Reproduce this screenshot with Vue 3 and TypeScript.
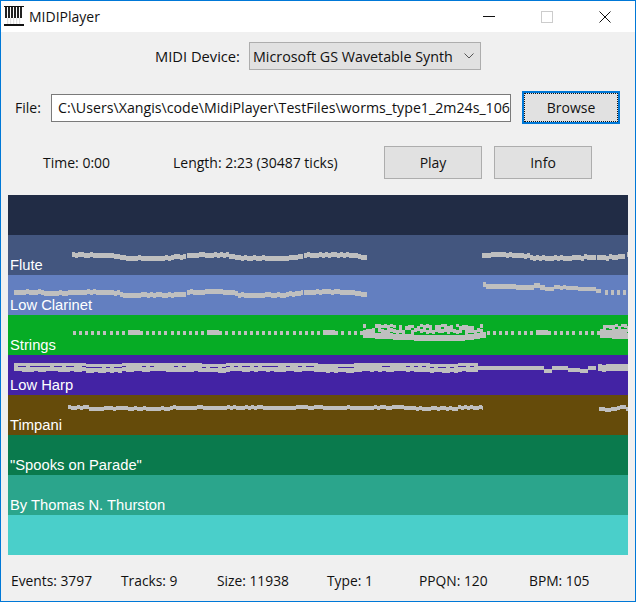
<template>
  <div class="window">
    <!-- title bar -->
    <div class="titlebar">
      <svg class="app-icon" width="20" height="20" viewBox="0 0 20 20">
        <rect x="0" y="0" width="20" height="20" fill="#fff" />
        <rect x="0" y="0" width="20" height="1" fill="#111" />
        <rect x="0" y="18" width="20" height="2" fill="#111" />
        <rect v-for="k in 6" :key="k" :x="k * 3 - 2" y="1" width="2" height="11" fill="#222" />
        <rect v-for="k in 5" :key="'w' + k" :x="k * 3 + 0.5" y="12" width="0.6" height="6" fill="#c4c4c4" />
      </svg>
      <span class="app-title">MIDIPlayer</span>
      <div class="win-btns">
        <svg width="12" height="12" viewBox="0 0 12 12"><rect x="0" y="5" width="12" height="1" fill="#111" /></svg>
        <svg width="12" height="12" viewBox="0 0 12 12"><rect x="0.5" y="0.5" width="11" height="11" fill="none" stroke="#ccc" /></svg>
        <svg width="12" height="12" viewBox="0 0 12 12"><path d="M0.5 0.5L11.5 11.5M11.5 0.5L0.5 11.5" stroke="#111" fill="none" /></svg>
      </div>
    </div>

    <div class="device-row">
      <label>MIDI Device:</label>
      <div class="select">
        <span>Microsoft GS Wavetable Synth</span>
        <svg width="10" height="6" viewBox="0 0 10 6"><path d="M0.5 0.5L5 5L9.5 0.5" fill="none" stroke="#555" /></svg>
      </div>
    </div>

    <div class="file-row">
      <label>File:</label>
      <input class="file-input" type="text" readonly :value="filePath" />
      <button class="btn btn-browse"><span>Browse</span></button>
    </div>

    <div class="time-row">
      <span class="time">Time: 0:00</span>
      <span class="length">Length: 2:23 (30487 ticks)</span>
      <button class="btn btn-play">Play</button>
      <button class="btn btn-info">Info</button>
    </div>

    <div class="tracks">
      <div v-for="t in tracks" :key="t.color" class="lane" :style="{ background: t.color }">
        <span>{{ t.name }}</span>
      </div>
      <svg class="notes" width="620" height="360" viewBox="8 195 620 360" shape-rendering="crispEdges">
        <rect v-for="(n, i) in notes" :key="i" :x="n.x" :y="n.y" :width="n.w" :height="n.h" fill="#bfbfbf" />
      </svg>
    </div>

    <div class="status">
      <span v-for="s in stats" :key="s">{{ s }}</span>
    </div>
  </div>
</template>

<script setup lang="ts">
interface NoteRect { x: number; y: number; w: number; h: number }

const filePath = 'C:\\Users\\Xangis\\code\\MidiPlayer\\TestFiles\\worms_type1_2m24s_106'

const tracks = [
  { name: '', color: '#212c45' },
  { name: 'Flute', color: '#43567f' },
  { name: 'Low Clarinet', color: '#637fc0' },
  { name: 'Strings', color: '#06ac25' },
  { name: 'Low Harp', color: '#4323a4' },
  { name: 'Timpani', color: '#654b0a' },
  { name: '"Spooks on Parade"', color: '#0a7a4d' },
  { name: 'By Thomas N. Thurston', color: '#2ba58c' },
  { name: '', color: '#4acfca' },
]

const stats = ['Events: 3797', 'Tracks: 9', 'Size: 11938', 'Type: 1', 'PPQN: 120', 'BPM: 105']

// fixed seed so the note lanes come out the same every time
let seed = 7
function rnd(): number {
  seed = (seed * 16807) % 2147483647
  return seed / 2147483647
}

function along(pts: number[][], t: number): number {
  for (let i = 1; i < pts.length; i++) {
    if (t <= pts[i][0]) {
      const a = pts[i - 1]
      const b = pts[i]
      return a[1] + ((t - a[0]) / (b[0] - a[0])) * (b[1] - a[1])
    }
  }
  return pts[pts.length - 1][1]
}

const notes: NoteRect[] = []

function band(x0: number, x1: number, y: number, pts: number[][], len: number, h: number, jitter = 1) {
  for (let x = x0; x < x1; x += 3) {
    const off = along(pts, (x - x0) / len)
    const j = rnd() < 0.35 ? jitter : 0
    notes.push({ x, y: Math.round(y + off - j), w: Math.min(3, x1 - x), h })
  }
}

function dots(x0: number, x1: number, y: number) {
  for (let x = x0; x < x1; x += 6.1) {
    const wide = (x > 122 && x < 136) || (x > 202 && x < 214) || (x > 322 && x < 332) || (x > 534 && x < 544)
    notes.push({ x: Math.round(x), y: wide ? y - 1 : y, w: wide ? 6 : 3, h: wide ? 5 : 4 })
  }
}

function cluster(x0: number, x1: number) {
  for (let x = x0; x < x1; x += 3) {
    const t = (x - x0) / 120
    if (rnd() < 0.8) notes.push({ x, y: 324 + Math.round(rnd() * 2), w: 3, h: 3 + Math.round(rnd() * 2) })
    if (rnd() < 0.85) notes.push({ x, y: 328 + Math.round(rnd() * 2), w: 3, h: 4 })
    notes.push({ x, y: 332 + Math.round(along([[0, 0], [0.5, 3], [0.8, 3], [1, 0]], t)), w: 3, h: 6 })
  }
}

const flute = [[0, 0], [0.3, 0], [0.38, 1], [0.45, 3], [0.8, 3], [0.95, 2], [1, 1]]
const fluteEnd = [[0, 0], [0.4, 0], [0.45, 1], [0.5, 2], [1, 2]]

// flute
band(72, 186, 253, flute, 114, 5)
band(187, 303, 253, flute, 116, 5)
band(304, 367, 253, fluteEnd, 116, 5)
band(482, 596, 253, flute, 114, 5)
band(597, 625, 254, [[0, 1], [0.2, 2], [1, 0]], 28, 5)
notes.push({ x: 627, y: 252, w: 1, h: 5 })

// low clarinet
band(14, 72, 290, [[0, 0], [1, 1]], 58, 5)
band(72, 186, 290, flute, 114, 5)
band(187, 303, 290, flute, 116, 5)
band(304, 367, 290, fluteEnd, 116, 5)
band(483, 545, 284, [[0, 0], [1, 1]], 62, 5, 2)
band(545, 601, 287, [[0, 0], [0.3, -1], [0.8, 0], [1, 3]], 56, 4)
for (let x = 605; x < 628; x += 6) notes.push({ x, y: 290, w: 3, h: 5 })

// strings
dots(73, 362, 331)
cluster(363, 484)
dots(487, 597, 331)
cluster(600, 628)

// low harp
const harp = [[0, 0], [0.27, 0], [0.33, 1], [0.42, 1], [0.5, 0], [0.77, 0], [0.83, 1], [1, 0]]
for (let x = 14; x < 476; x += 4) {
  const off = Math.round(along(harp, ((x - 14) % 231) / 231))
  notes.push({ x, y: 363 + off, w: 4, h: 3 })
  notes.push({ x, y: 367 + off, w: 4, h: 4 + Math.round(rnd()) })
  if (rnd() < 0.6) notes.push({ x, y: 366 + off, w: 4, h: 1 })
}
for (let x = 476; x < 596; x += 4) {
  const y = x > 540 && x < 552 ? 370 : x > 565 && x < 585 ? 369 : 367
  notes.push({ x, y: y + Math.round(rnd() * 0.6) - 1, w: 4, h: 4 })
}
for (let x = 598; x < 628; x += 4) {
  notes.push({ x, y: 364 + Math.round(rnd()), w: 4, h: 7 })
}

// timpani
band(68, 483, 406, [[0, 0], [0.1, 1], [0.4, 0], [0.8, 0], [0.87, 1], [1, 0]], 415, 4)
band(599, 628, 407, [[0, 0], [0.3, 1], [0.7, -1], [1, 0]], 29, 4)
</script>

<style>
html, body { margin: 0; padding: 0; background: #f0f0f0; }
</style>

<style scoped>
.window{box-sizing:border-box;width:636px;height:602px;border:1px solid #0078d7;background:#f0f0f0;font-family:"Open Sans","Noto Sans",sans-serif;font-size:14px;color:#111;overflow:hidden}

.titlebar{display:flex;align-items:center;height:31px;background:#fff;padding-left:3px}
.app-icon{flex:none;align-self:flex-start;margin-top:5px}
.app-title{margin-left:5px}
.win-btns{display:flex;gap:46px;margin-left:auto;margin-right:24px}

.device-row{display:flex;align-items:center;height:28px;margin-top:10px;padding-left:154px}
.device-row label{width:94px;font-size:14.7px}
.select{box-sizing:border-box;display:flex;align-items:center;justify-content:space-between;width:232px;height:28px;padding:0 6px 0 3px;background:#e1e1e1;border:1px solid #adadad;font-size:14.3px}

.file-row{display:flex;align-items:center;height:33px;margin-top:21px;padding-left:14px}
.file-row label{width:36px}
.file-input{box-sizing:border-box;width:460px;height:28px;padding:0 0 0 6px;border:1px solid #7a7a7a;background:#fff;font:inherit;font-size:14.2px;color:#111;outline:none}
.btn{box-sizing:border-box;height:33px;width:98px;padding:0;background:#e1e1e1;border:1px solid #adadad;font:inherit;color:#111}
.btn-browse{margin-left:11px;border:2px solid #0078d7}
.btn-browse span{display:flex;align-items:center;justify-content:center;height:100%;outline:1px dotted #111;outline-offset:-1px}

.time-row{display:flex;align-items:center;height:33px;margin-top:22px;padding-left:42px}
.time{width:130px}
.length{width:211px}
.btn-info{margin-left:12px}

.tracks{position:relative;width:620px;margin:16px 0 0 7px}
.lane{box-sizing:border-box;display:flex;align-items:flex-end;height:40px;padding:0 0 2px 2px;font-family:"Liberation Sans",Arial,sans-serif;font-size:14.75px;color:#fff}
.notes{position:absolute;left:0;top:0}

.status{display:grid;grid-template-columns:110px 96px 110px 92px 110px auto;padding:16px 0 0 10px;font-size:13.8px}
</style>
